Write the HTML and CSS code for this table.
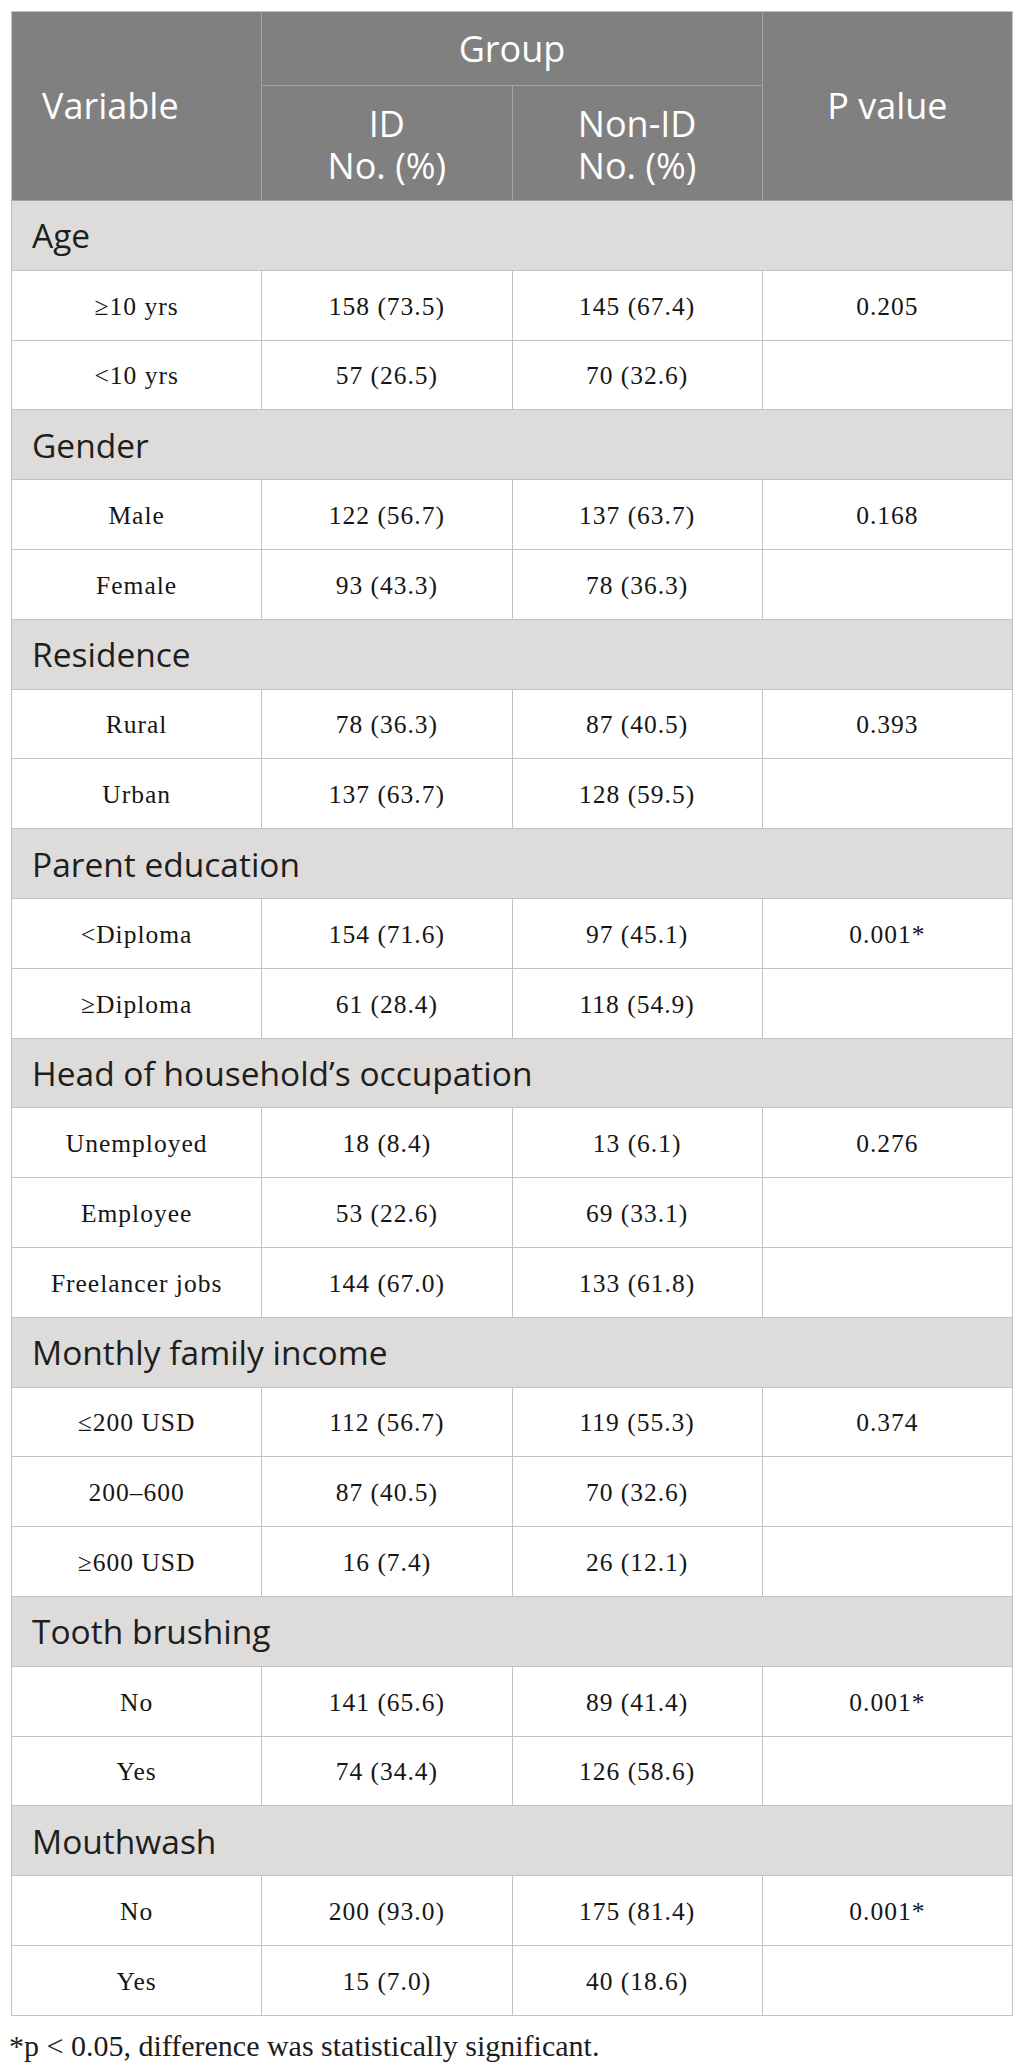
FILE: index.html
```html
<!DOCTYPE html>
<html lang="en">
<head>
<meta charset="utf-8">
<title>Table</title>
<link rel="stylesheet" href="styles.css">
</head>
<body>
<div class="wrap">
<table class="data">
  <colgroup><col class="c"><col class="c"><col class="c"><col class="c"></colgroup>
  <thead>
    <tr class="h1">
      <th rowspan="2" class="var">Variable</th>
      <th colspan="2" class="grp">Group</th>
      <th rowspan="2" class="pv">P value</th>
    </tr>
    <tr class="h2">
      <th><span class="ln">ID</span><span class="ln">No. (%)</span></th>
      <th><span class="ln">Non-ID</span><span class="ln">No. (%)</span></th>
    </tr>
  </thead>
  <tbody>
    <tr class="sec"><td colspan="4">Age</td></tr>
    <tr><td>≥10 yrs</td><td>158 (73.5)</td><td>145 (67.4)</td><td>0.205</td></tr>
    <tr><td>&lt;10 yrs</td><td>57 (26.5)</td><td>70 (32.6)</td><td></td></tr>
    <tr class="sec"><td colspan="4">Gender</td></tr>
    <tr><td>Male</td><td>122 (56.7)</td><td>137 (63.7)</td><td>0.168</td></tr>
    <tr><td>Female</td><td>93 (43.3)</td><td>78 (36.3)</td><td></td></tr>
    <tr class="sec"><td colspan="4">Residence</td></tr>
    <tr><td>Rural</td><td>78 (36.3)</td><td>87 (40.5)</td><td>0.393</td></tr>
    <tr><td>Urban</td><td>137 (63.7)</td><td>128 (59.5)</td><td></td></tr>
    <tr class="sec"><td colspan="4">Parent education</td></tr>
    <tr><td>&lt;Diploma</td><td>154 (71.6)</td><td>97 (45.1)</td><td>0.001*</td></tr>
    <tr><td>≥Diploma</td><td>61 (28.4)</td><td>118 (54.9)</td><td></td></tr>
    <tr class="sec"><td colspan="4">Head of household’s occupation</td></tr>
    <tr><td>Unemployed</td><td>18 (8.4)</td><td>13 (6.1)</td><td>0.276</td></tr>
    <tr><td>Employee</td><td>53 (22.6)</td><td>69 (33.1)</td><td></td></tr>
    <tr><td>Freelancer jobs</td><td>144 (67.0)</td><td>133 (61.8)</td><td></td></tr>
    <tr class="sec"><td colspan="4">Monthly family income</td></tr>
    <tr><td>≤200 USD</td><td>112 (56.7)</td><td>119 (55.3)</td><td>0.374</td></tr>
    <tr><td>200–600</td><td>87 (40.5)</td><td>70 (32.6)</td><td></td></tr>
    <tr><td>≥600 USD</td><td>16 (7.4)</td><td>26 (12.1)</td><td></td></tr>
    <tr class="sec"><td colspan="4">Tooth brushing</td></tr>
    <tr><td>No</td><td>141 (65.6)</td><td>89 (41.4)</td><td>0.001*</td></tr>
    <tr><td>Yes</td><td>74 (34.4)</td><td>126 (58.6)</td><td></td></tr>
    <tr class="sec"><td colspan="4">Mouthwash</td></tr>
    <tr><td>No</td><td>200 (93.0)</td><td>175 (81.4)</td><td>0.001*</td></tr>
    <tr><td>Yes</td><td>15 (7.0)</td><td>40 (18.6)</td><td></td></tr>
  </tbody>
</table>
<p class="note">*p &lt; 0.05, difference was statistically significant.</p>
</div>
</body>
</html>
```
FILE: styles.css
```css
html, body {
  margin: 0;
  padding: 0;
  background: #ffffff;
}
.wrap {
  padding: 11px 13px 0 11px;
}
.data {
  width: 1002px;
  border-collapse: collapse;
  table-layout: fixed;
}
.data .c {
  width: 25%;
}
.data th {
  background: #808080;
  color: #ffffff;
  font-family: "Open Sans", "Noto Sans", sans-serif;
  font-weight: 400;
  font-size: 36px;
  line-height: 42px;
  border: 1px solid #a3a3a3;
  text-align: center;
  padding: 0;
}
.data th .ln {
  display: block;
  height: 42px;
}
.data thead tr:first-child th {
  border-top-color: #c4c4c4;
}
.data thead th.var {
  border-left-color: #c4c4c4;
  text-align: left;
  padding-left: 30px;
}
.data thead th.pv {
  border-right-color: #c4c4c4;
}
.data .h1 {
  height: 74px;
}
.data .h2 {
  height: 115px;
}
.data .h2 th {
  padding-top: 4px;
}
.data tbody tr {
  height: 69.8px;
}
.data td {
  border: 1px solid #c2c2c2;
  padding: 3px 0 0 0;
  line-height: 30px;
  text-align: center;
  font-family: "Liberation Serif", "Times New Roman", serif;
  font-size: 25.5px;
  letter-spacing: 1px;
  color: #161616;
}
.data tr.sec td {
  background: #dddcdb;
  text-align: left;
  padding: 0 0 0 20px;
  line-height: 40px;
  font-family: "Open Sans", "Noto Sans", sans-serif;
  font-size: 33.5px;
  letter-spacing: 0;
  color: #1e1e1e;
}
.note {
  margin: 13px 0 0 -2px;
  font-family: "Liberation Serif", "Times New Roman", serif;
  font-size: 30px;
  line-height: 34px;
  color: #1c1c1c;
}
```
